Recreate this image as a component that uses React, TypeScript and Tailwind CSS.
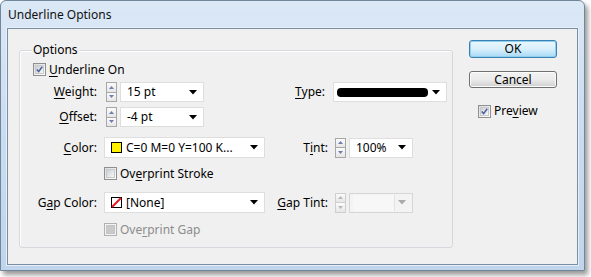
import type { ReactNode } from "react";

const font = { fontFamily: '"Noto Sans", "Open Sans", sans-serif' };

function Check({ checked = false, disabled = false }: { checked?: boolean; disabled?: boolean }) {
  return (
    <span
      className={`flex h-[13px] w-[13px] shrink-0 items-center justify-center border ${
        disabled ? "border-[#b1b1b1] bg-[#f4f4f4]" : "border-[#8e8f8f] bg-linear-to-br from-[#dcdcdc] to-[#ffffff]"
      }`}
    >
      {disabled ? (
        <span className="h-[9px] w-[9px] border border-[#c4c4c4] bg-[#c9c9c9]" />
      ) : (
        <span className="flex h-[9px] w-[9px] items-center justify-center border border-[#c9c9c9] bg-linear-to-br from-[#cbcfd5] to-[#f7f7f7]">
          {checked && (
            <svg width="9" height="9" viewBox="0 0 9 9">
              <path d="M1 4.5 L3.4 7.2 L8 1" fill="none" stroke="#4b61a0" strokeWidth="2" />
            </svg>
          )}
        </span>
      )}
    </span>
  );
}

function Key({ children }: { children: ReactNode }) {
  return <span className="underline underline-offset-2 decoration-1">{children}</span>;
}

function Spinner({ disabled = false }: { disabled?: boolean }) {
  const tri = disabled ? "#b8b8b8" : "#6d7fb0";
  const border = disabled ? "border-[#cfcfcf]" : "border-[#a7a7a7]";
  return (
    <div className={`flex h-[20px] w-[11px] shrink-0 flex-col border ${border} bg-[#f3f3f3]`}>
      <div className={`flex flex-1 items-center justify-center border-b ${border} bg-linear-to-b from-[#fbfbfb] to-[#e6e6e6]`}>
        <svg width="5" height="3" viewBox="0 0 5 3">
          <path d="M0 3 L2.5 0 L5 3 Z" fill={tri} />
        </svg>
      </div>
      <div className="flex flex-1 items-center justify-center bg-linear-to-b from-[#fbfbfb] to-[#e6e6e6]">
        <svg width="5" height="3" viewBox="0 0 5 3">
          <path d="M0 0 L2.5 3 L5 0 Z" fill={tri} />
        </svg>
      </div>
    </div>
  );
}

function Arrow({ disabled = false }: { disabled?: boolean }) {
  return (
    <svg width="8" height="5" viewBox="0 0 8 5" className="shrink-0">
      <path d="M0 0 L8 0 L4 4.5 Z" fill={disabled ? "#a9a9a9" : "#000"} />
    </svg>
  );
}

function Dropdown({
  width,
  children,
  disabled = false,
  pad = "pl-[6px]",
}: {
  width: string;
  children?: ReactNode;
  disabled?: boolean;
  pad?: string;
}) {
  return (
    <div
      className={`flex h-[20px] shrink-0 items-center border ${
        disabled ? "border-[#d6d6d6] bg-[#f3f3f3]" : "border-[#dedede] bg-white"
      } ${pad} pr-[6px] ${width}`}
    >
      <div className="flex min-w-0 flex-1 items-center gap-[4px]">{children}</div>
      <Arrow disabled={disabled} />
    </div>
  );
}

function Label({ width, children }: { width: string; children: ReactNode }) {
  return <div className={`shrink-0 text-right ${width}`}>{children}</div>;
}

export default function App() {
  return (
    <div className="h-[277px] w-[591px] overflow-hidden bg-white text-[12px] leading-[16px] text-black" style={font}>
      <div className="h-[271px] w-[585px] rounded-t-[6px] border border-[#71859b] bg-linear-to-b from-[#dbe8f6] via-[#cadcf0] to-[#c0d5eb] px-[6px] shadow-[3px_4px_5px_rgba(0,0,0,0.4)]">
        <div className="flex h-[27px] items-center pl-[1px] pt-[1px] text-[#111]">Underline Options</div>

        <div className="flex h-[237px] border border-[#7a8da3] bg-[#f0f0f0] shadow-[0_0_0_1px_#e6eef7]">
          {/* Options group */}
          <div className="relative ml-[11px] mt-[21px] h-[198px] w-[434px] rounded-[3px] border border-[#d5d9dd] shadow-[inset_1px_1px_0_#fff]">
            <span className="absolute -top-[9px] left-[12px] bg-[#f0f0f0] px-[1px]">Options</span>

            <div className="mt-[12px] flex h-[13px] items-center gap-[3px] pl-[13px]">
              <Check checked />
              <span>
                <Key>U</Key>nderline On
              </span>
            </div>

            <div className="mt-[6px] flex h-[20px] items-center">
              <Label width="w-[77px]">
                <Key>W</Key>eight:
              </Label>
              <div className="ml-[9px]">
                <Spinner />
              </div>
              <div className="ml-[3px]">
                <Dropdown width="w-[84px]">15 pt</Dropdown>
              </div>
              <Label width="w-[121px]">
                <Key>T</Key>ype:
              </Label>
              <div className="ml-[8px]">
                <Dropdown width="w-[114px]" pad="pl-[3px]">
                  <span className="h-[9px] w-[91px] rounded-[4px] bg-black" />
                </Dropdown>
              </div>
            </div>

            <div className="mt-[5px] flex h-[20px] items-center">
              <Label width="w-[77px]">
                <Key>O</Key>ffset:
              </Label>
              <div className="ml-[9px]">
                <Spinner />
              </div>
              <div className="ml-[3px]">
                <Dropdown width="w-[84px]">-4 pt</Dropdown>
              </div>
            </div>

            <div className="mt-[10px] flex h-[21px] items-center">
              <Label width="w-[77px]">
                <Key>C</Key>olor:
              </Label>
              <div className="ml-[7px]">
                <Dropdown width="w-[161px] h-[21px]">
                  <span className="h-[11px] w-[11px] shrink-0 border border-black bg-[#fff200]" />
                  <span className="whitespace-nowrap">C=0 M=0 Y=100 K...</span>
                </Dropdown>
              </div>
              <Label width="w-[63px]">
                T<Key>i</Key>nt:
              </Label>
              <div className="ml-[7px]">
                <Spinner />
              </div>
              <div className="ml-[3px]">
                <Dropdown width="w-[64px]">100%</Dropdown>
              </div>
            </div>

            <div className="mt-[9px] flex h-[13px] items-center gap-[3px] pl-[84px]">
              <Check />
              <span>
                Ov<Key>e</Key>rprint Stroke
              </span>
            </div>

            <div className="mt-[12px] flex h-[21px] items-center">
              <Label width="w-[77px]">
                G<Key>a</Key>p Color:
              </Label>
              <div className="ml-[7px]">
                <Dropdown width="w-[161px] h-[21px]">
                  <svg width="11" height="11" viewBox="0 0 11 11" className="shrink-0">
                    <rect x="0.5" y="0.5" width="10" height="10" fill="#fff" stroke="#000" />
                    <path d="M1 10 L10 1" stroke="#e8141b" strokeWidth="2" />
                  </svg>
                  <span>[None]</span>
                </Dropdown>
              </div>
              <Label width="w-[63px]">
                <Key>G</Key>ap Tint:
              </Label>
              <div className="ml-[7px]">
                <Spinner disabled />
              </div>
              <div className="ml-[3px]">
                <Dropdown width="w-[64px]" disabled pad="pl-[3px]">
                  <span className="h-[16px] w-[42px] border-r border-[#e2e2e2] bg-[#f7f7f7]" />
                </Dropdown>
              </div>
            </div>

            <div className="mt-[10px] flex h-[13px] items-center gap-[3px] pl-[84px]">
              <Check disabled />
              <span className="text-[#8c8c8c]">
                Ove<Key>r</Key>print Gap
              </span>
            </div>
          </div>

          {/* Buttons */}
          <div className="ml-[16px] mt-[11px] flex flex-col">
            <button className="h-[18px] w-[88px] rounded-[3px] border border-[#3c7fb1] bg-linear-to-b from-[#eaf6fd] via-[#d9f0fc] to-[#a7d9f5] leading-[14px] shadow-[inset_0_0_0_1px_#8fd0f1]">
              OK
            </button>
            <button className="mt-[13px] h-[17px] w-[88px] rounded-[3px] border border-[#707070] bg-linear-to-b from-[#f2f2f2] via-[#ebebeb] to-[#cfcfcf] leading-[14px] shadow-[inset_0_0_0_1px_#fcfcfc]">
              Cancel
            </button>
            <div className="ml-[9px] mt-[15px] flex items-center gap-[3px]">
              <Check checked />
              <span>
                Pre<Key>v</Key>iew
              </span>
            </div>
          </div>
        </div>
      </div>
    </div>
  );
}
